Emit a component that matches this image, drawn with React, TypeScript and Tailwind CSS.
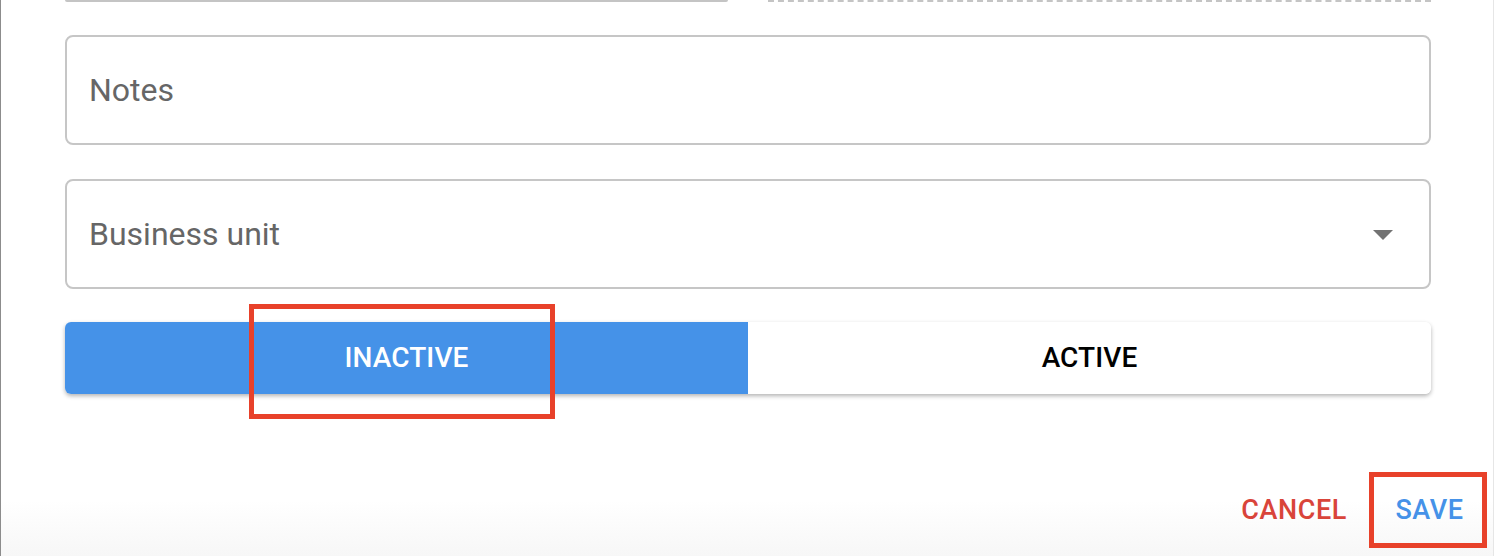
import React from "react";

export default function App() {
  return (
    <div className="relative flex h-[556px] w-[1498px] overflow-hidden bg-white font-['Roboto',_'Noto_Sans',_sans-serif]">
      <div className="flex w-[1493px] flex-col border-l border-[#8c8c8c] bg-linear-to-b from-white from-[90%] to-[#f7f7f7]">
        <div className="flex flex-col pl-[64px] pr-[62px]">
          {/* bottoms of the fields above */}
          <div className="flex h-[2px] gap-[40px]">
            <div className="h-[2px] w-[663px] rounded-b-[8px] border-b-2 border-[#c4c4c4]" />
            <div className="h-[2px] flex-1 border-b-2 border-dashed border-[#c4c4c4]" />
          </div>

          {/* Notes */}
          <div className="mt-[33px] flex h-[110px] items-center rounded-[8px] border-2 border-[#c6c6c6] pl-[22px]">
            <span className="text-[32px] leading-none text-[#666666]">Notes</span>
          </div>

          {/* Business unit */}
          <div className="mt-[34px] flex h-[110px] items-center justify-between rounded-[8px] border-2 border-[#c6c6c6] pl-[22px] pr-[36px]">
            <span className="text-[32px] leading-none text-[#666666]">Business unit</span>
            <svg width="20" height="10" viewBox="0 0 20 10" className="mt-[2px]">
              <polygon points="0,0 20,0 10,10" fill="#737373" />
            </svg>
          </div>

          {/* Toggle */}
          <div className="mt-[33px] flex h-[72px] overflow-hidden rounded-[6px] shadow-[0_2px_4px_rgba(0,0,0,0.3)]">
            <div className="flex flex-1 items-center justify-center bg-[#4592e8]">
              <span className="text-[28px] font-medium leading-none tracking-[0.1px] text-white">INACTIVE</span>
            </div>
            <div className="flex flex-1 items-center justify-center bg-white">
              <span className="text-[28px] font-medium leading-none tracking-[0.1px] text-black">ACTIVE</span>
            </div>
          </div>
        </div>

        {/* Actions */}
        <div className="mt-auto mb-[8px] flex items-center justify-end pr-[6px]">
          <span className="mr-[22px] text-[27px] font-medium leading-none tracking-[0.6px] text-[#d9443a]">CANCEL</span>
          <div className="flex h-[76px] w-[118px] items-center justify-center border-[5px] border-[#e8412a] pl-[3px]">
            <span className="text-[27px] font-medium leading-none tracking-[0.6px] text-[#4592e8]">SAVE</span>
          </div>
        </div>
      </div>
      <div className="w-[1px] bg-[#e6e6e6]" />
      <div className="flex-1 bg-white" />

      {/* annotation box over INACTIVE */}
      <div className="pointer-events-none absolute left-[249px] top-[304px] h-[115px] w-[306px] border-[5px] border-[#e8412a]" />
    </div>
  );
}
